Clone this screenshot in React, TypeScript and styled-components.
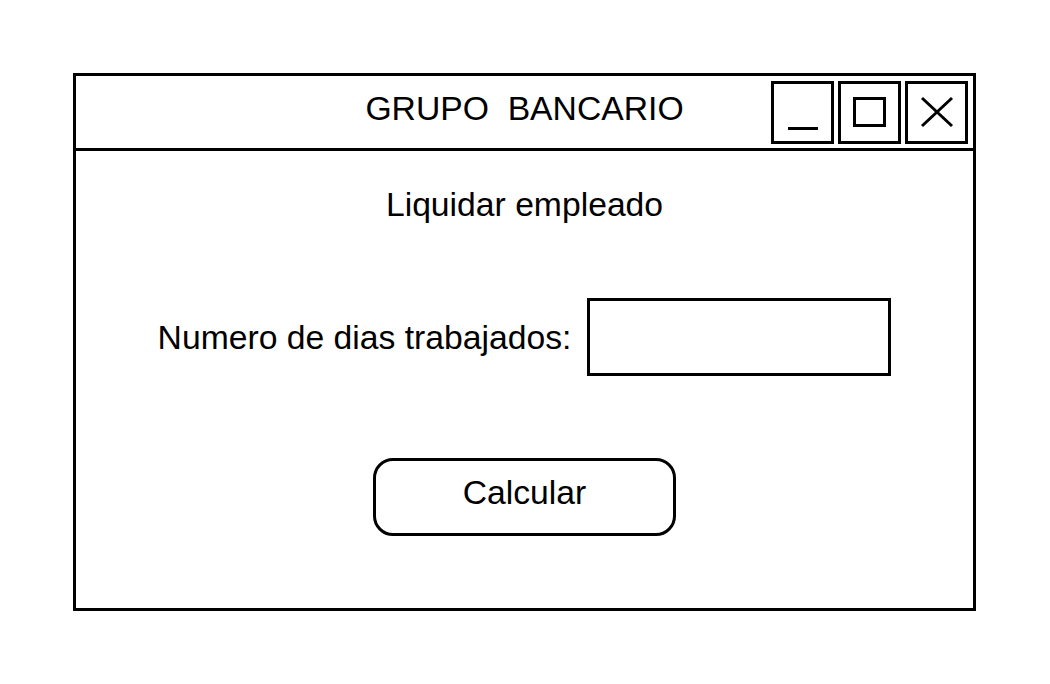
import React from 'react'
import styled, { createGlobalStyle } from 'styled-components'

const GlobalStyle = createGlobalStyle`
  html, body {
    margin: 0;
    padding: 0;
    background: #ffffff;
  }
  body {
    font-family: "Liberation Sans", Arial, sans-serif;
    color: #000000;
  }
`

const Page = styled.div`
  width: 1050px;
  height: 684px;
  box-sizing: border-box;
  padding: 73px 0 0 73px;
`

const Window = styled.section`
  width: 903px;
  height: 538px;
  box-sizing: border-box;
  border: 3px solid #000;
  display: flex;
  flex-direction: column;
  background: #fff;
`

const TitleBar = styled.header`
  height: 75px;
  box-sizing: border-box;
  border-bottom: 3px solid #000;
  display: grid;
  grid-template-columns: 1fr auto 1fr;
`

const Title = styled.h1`
  grid-column: 2;
  margin: 0;
  padding-top: 13px;
  font-size: 33.7px;
  font-weight: 400;
  line-height: 38px;
  white-space: pre;
`

const Controls = styled.div`
  grid-column: 3;
  justify-self: end;
  display: flex;
  gap: 4px;
  padding: 5px 5px 0 0;
`

const ControlButton = styled.div`
  width: 63px;
  height: 63px;
  box-sizing: border-box;
  border: 3px solid #000;
  display: flex;

  svg {
    width: 57px;
    height: 57px;
  }
`

const Body = styled.div`
  flex: 1;
  display: flex;
  flex-direction: column;
  align-items: center;
  padding-top: 34px;
`

const Heading = styled.h2`
  margin: 0;
  font-size: 33.7px;
  font-weight: 400;
  line-height: 38px;
`

const FieldRow = styled.div`
  display: flex;
  align-items: center;
  gap: 16px;
  margin-top: 75px;
`

const Label = styled.label`
  font-size: 33.7px;
  line-height: 38px;
`

const Field = styled.div`
  width: 304px;
  height: 78px;
  box-sizing: border-box;
  border: 3px solid #000;
`

const ActionButton = styled.div`
  margin-top: 82px;
  width: 303px;
  height: 78px;
  box-sizing: border-box;
  border: 3px solid #000;
  border-radius: 20px;
  padding-top: 12px;
  text-align: center;
  font-size: 33.7px;
  line-height: 38px;
`

const App = () => {
  return (
    <>
      <GlobalStyle />
      <Page>
        <Window>
          <TitleBar>
            <Title>{'GRUPO  BANCARIO'}</Title>
            <Controls>
              <ControlButton>
                <svg viewBox="0 0 57 57">
                  <line x1="14" y1="44.5" x2="44" y2="44.5" stroke="#000" strokeWidth="3" />
                </svg>
              </ControlButton>
              <ControlButton>
                <svg viewBox="0 0 57 57">
                  <rect x="13.5" y="14.5" width="30" height="27" fill="none" stroke="#000" strokeWidth="3" />
                </svg>
              </ControlButton>
              <ControlButton>
                <svg viewBox="0 0 57 57">
                  <path d="M14 14 L44 42 M44 14 L14 42" stroke="#000" strokeWidth="3" fill="none" />
                </svg>
              </ControlButton>
            </Controls>
          </TitleBar>
          <Body>
            <Heading>Liquidar empleado</Heading>
            <FieldRow>
              <Label>Numero de dias trabajados:</Label>
              <Field />
            </FieldRow>
            <ActionButton>Calcular</ActionButton>
          </Body>
        </Window>
      </Page>
    </>
  )
}

export default App
